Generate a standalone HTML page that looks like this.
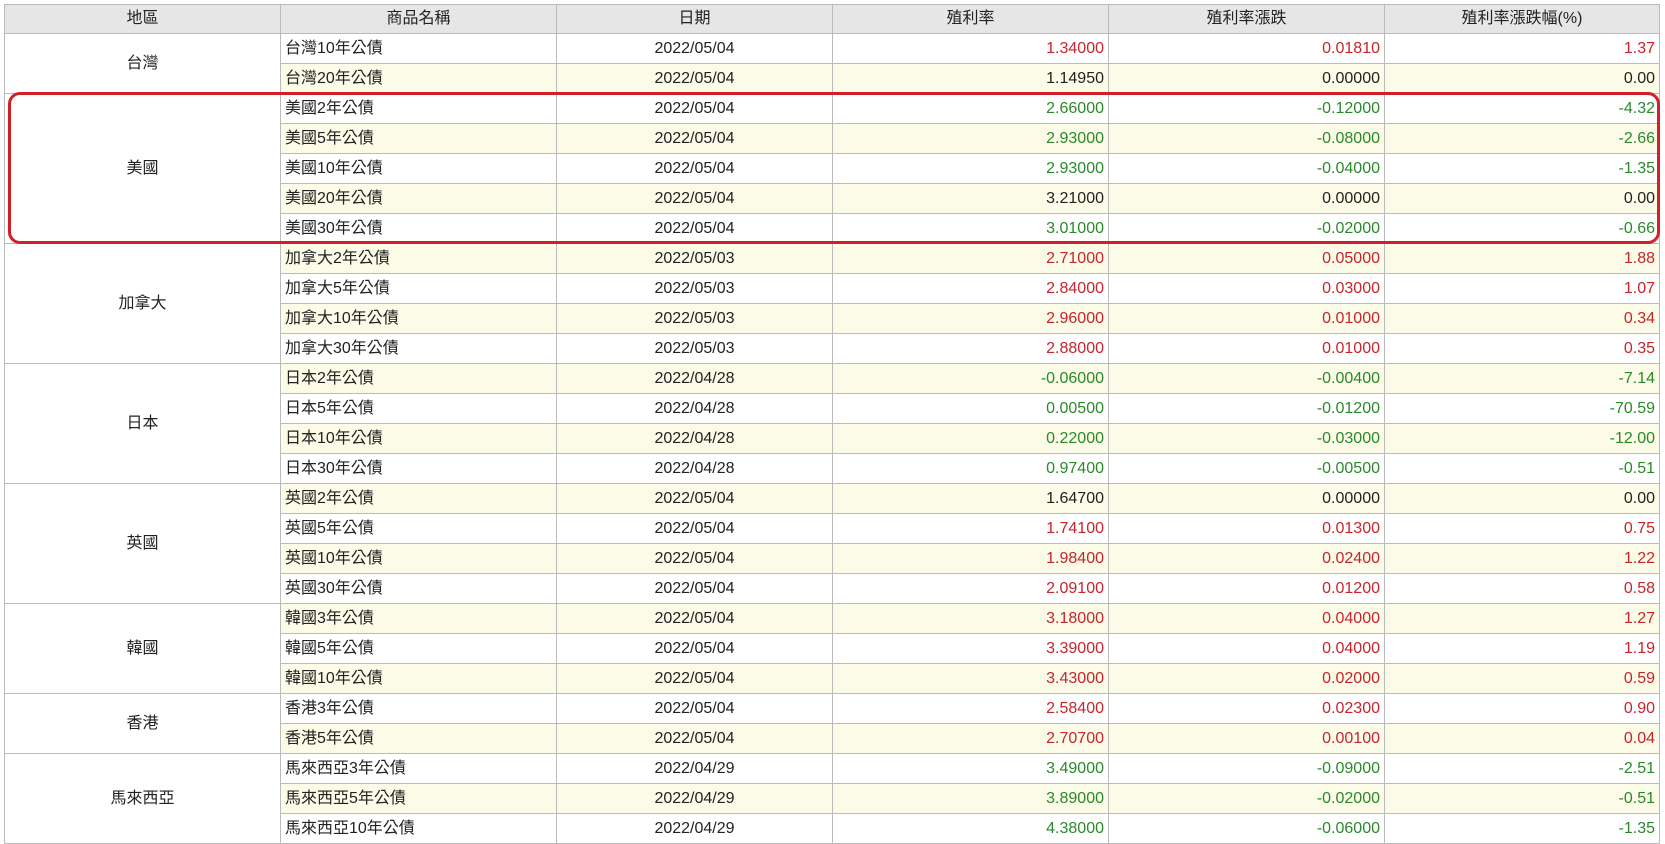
<!DOCTYPE html>
<html><head><meta charset="utf-8"><style>
body{margin:0;background:#fff;width:1665px;height:844px;overflow:hidden;position:relative;font-family:"Liberation Sans","Noto Sans CJK TC",sans-serif;font-size:16px;color:#222}
table{position:absolute;left:4px;top:4px;border-collapse:collapse;table-layout:fixed;width:1655px}
td,th{border:1px solid #bbb;padding:0 4px;height:29px;line-height:28px;white-space:nowrap;overflow:hidden}
th{background:#e6e6e6;font-weight:normal;height:28px;color:#222}
td.c{text-align:center}td.r{text-align:right}
tr.y td{background:#fbfbe8}
td.reg{background:#fff!important;text-align:center}
.R{color:#c8242b}.G{color:#2a8a2a}
.box{position:absolute;left:8px;top:92px;width:1646px;height:146px;border:3px solid #d0202a;border-radius:12px}
</style></head><body>
<table>
<colgroup><col style="width:276px"><col style="width:276px"><col style="width:276px"><col style="width:276px"><col style="width:276px"><col style="width:275px"></colgroup>
<tr><th>地區</th><th>商品名稱</th><th>日期</th><th>殖利率</th><th>殖利率漲跌</th><th>殖利率漲跌幅(%)</th></tr>
<tr><td class="reg" rowspan="2">台灣</td><td>台灣10年公債</td><td class="c">2022/05/04</td><td class="r R">1.34000</td><td class="r R">0.01810</td><td class="r R">1.37</td></tr>
<tr class="y"><td>台灣20年公債</td><td class="c">2022/05/04</td><td class="r">1.14950</td><td class="r">0.00000</td><td class="r">0.00</td></tr>
<tr><td class="reg" rowspan="5">美國</td><td>美國2年公債</td><td class="c">2022/05/04</td><td class="r G">2.66000</td><td class="r G">-0.12000</td><td class="r G">-4.32</td></tr>
<tr class="y"><td>美國5年公債</td><td class="c">2022/05/04</td><td class="r G">2.93000</td><td class="r G">-0.08000</td><td class="r G">-2.66</td></tr>
<tr><td>美國10年公債</td><td class="c">2022/05/04</td><td class="r G">2.93000</td><td class="r G">-0.04000</td><td class="r G">-1.35</td></tr>
<tr class="y"><td>美國20年公債</td><td class="c">2022/05/04</td><td class="r">3.21000</td><td class="r">0.00000</td><td class="r">0.00</td></tr>
<tr><td>美國30年公債</td><td class="c">2022/05/04</td><td class="r G">3.01000</td><td class="r G">-0.02000</td><td class="r G">-0.66</td></tr>
<tr class="y"><td class="reg" rowspan="4">加拿大</td><td>加拿大2年公債</td><td class="c">2022/05/03</td><td class="r R">2.71000</td><td class="r R">0.05000</td><td class="r R">1.88</td></tr>
<tr><td>加拿大5年公債</td><td class="c">2022/05/03</td><td class="r R">2.84000</td><td class="r R">0.03000</td><td class="r R">1.07</td></tr>
<tr class="y"><td>加拿大10年公債</td><td class="c">2022/05/03</td><td class="r R">2.96000</td><td class="r R">0.01000</td><td class="r R">0.34</td></tr>
<tr><td>加拿大30年公債</td><td class="c">2022/05/03</td><td class="r R">2.88000</td><td class="r R">0.01000</td><td class="r R">0.35</td></tr>
<tr class="y"><td class="reg" rowspan="4">日本</td><td>日本2年公債</td><td class="c">2022/04/28</td><td class="r G">-0.06000</td><td class="r G">-0.00400</td><td class="r G">-7.14</td></tr>
<tr><td>日本5年公債</td><td class="c">2022/04/28</td><td class="r G">0.00500</td><td class="r G">-0.01200</td><td class="r G">-70.59</td></tr>
<tr class="y"><td>日本10年公債</td><td class="c">2022/04/28</td><td class="r G">0.22000</td><td class="r G">-0.03000</td><td class="r G">-12.00</td></tr>
<tr><td>日本30年公債</td><td class="c">2022/04/28</td><td class="r G">0.97400</td><td class="r G">-0.00500</td><td class="r G">-0.51</td></tr>
<tr class="y"><td class="reg" rowspan="4">英國</td><td>英國2年公債</td><td class="c">2022/05/04</td><td class="r">1.64700</td><td class="r">0.00000</td><td class="r">0.00</td></tr>
<tr><td>英國5年公債</td><td class="c">2022/05/04</td><td class="r R">1.74100</td><td class="r R">0.01300</td><td class="r R">0.75</td></tr>
<tr class="y"><td>英國10年公債</td><td class="c">2022/05/04</td><td class="r R">1.98400</td><td class="r R">0.02400</td><td class="r R">1.22</td></tr>
<tr><td>英國30年公債</td><td class="c">2022/05/04</td><td class="r R">2.09100</td><td class="r R">0.01200</td><td class="r R">0.58</td></tr>
<tr class="y"><td class="reg" rowspan="3">韓國</td><td>韓國3年公債</td><td class="c">2022/05/04</td><td class="r R">3.18000</td><td class="r R">0.04000</td><td class="r R">1.27</td></tr>
<tr><td>韓國5年公債</td><td class="c">2022/05/04</td><td class="r R">3.39000</td><td class="r R">0.04000</td><td class="r R">1.19</td></tr>
<tr class="y"><td>韓國10年公債</td><td class="c">2022/05/04</td><td class="r R">3.43000</td><td class="r R">0.02000</td><td class="r R">0.59</td></tr>
<tr><td class="reg" rowspan="2">香港</td><td>香港3年公債</td><td class="c">2022/05/04</td><td class="r R">2.58400</td><td class="r R">0.02300</td><td class="r R">0.90</td></tr>
<tr class="y"><td>香港5年公債</td><td class="c">2022/05/04</td><td class="r R">2.70700</td><td class="r R">0.00100</td><td class="r R">0.04</td></tr>
<tr><td class="reg" rowspan="3">馬來西亞</td><td>馬來西亞3年公債</td><td class="c">2022/04/29</td><td class="r G">3.49000</td><td class="r G">-0.09000</td><td class="r G">-2.51</td></tr>
<tr class="y"><td>馬來西亞5年公債</td><td class="c">2022/04/29</td><td class="r G">3.89000</td><td class="r G">-0.02000</td><td class="r G">-0.51</td></tr>
<tr><td>馬來西亞10年公債</td><td class="c">2022/04/29</td><td class="r G">4.38000</td><td class="r G">-0.06000</td><td class="r G">-1.35</td></tr>
</table>
<div class="box"></div>
</body></html>
